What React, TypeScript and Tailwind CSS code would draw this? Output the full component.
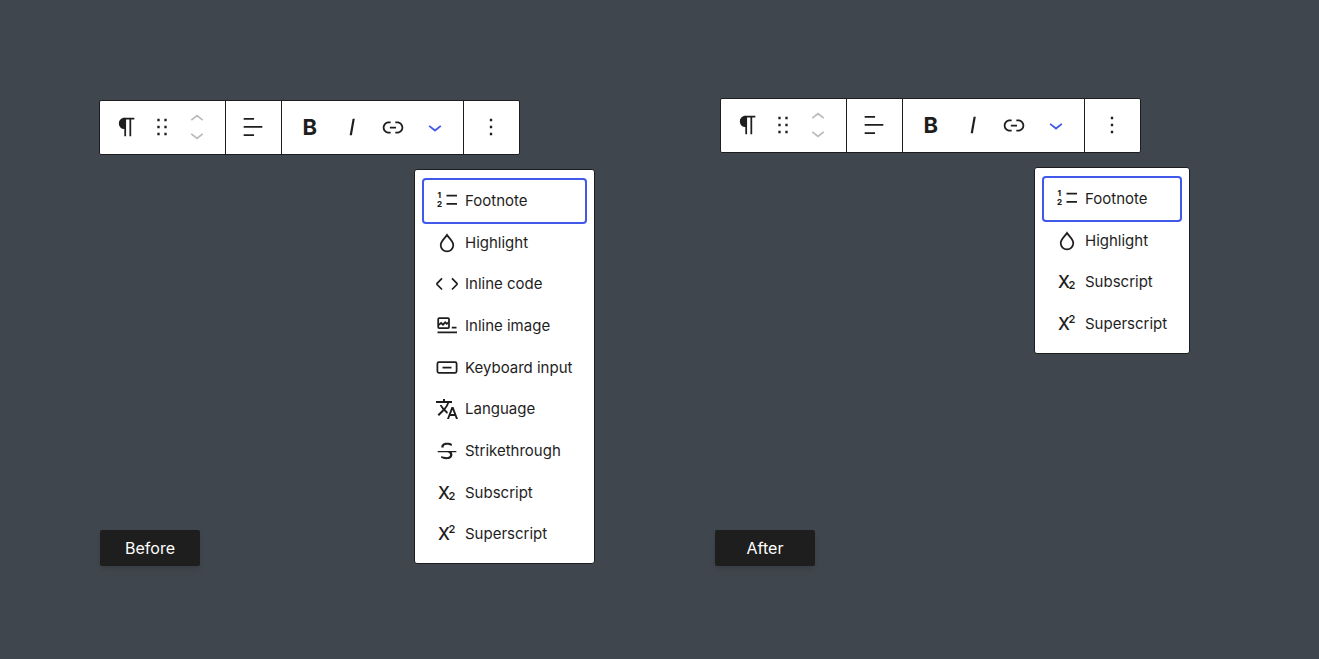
import type { ReactNode } from "react";
import clsx from "clsx";
import { MdTranslate } from "react-icons/md";

type IconProps = { children: ReactNode; size?: "default" | "mover" };

// 24 unit filled icon
const SolidIcon = ({ children, size = "default" }: IconProps) => (
  <svg
    viewBox={size === "mover" ? "0 5 24 14" : "0 0 24 24"}
    className={clsx("shrink-0", size === "mover" ? "h-4 w-7" : "size-7")}
    fill="currentColor"
    aria-hidden="true"
  >
    {children}
  </svg>
);

// 28 unit stroked icon, used in the dropdown
const MenuIcon = ({ children }: { children: ReactNode }) => (
  <svg
    viewBox="0 0 28 28"
    className="size-7 shrink-0"
    fill="none"
    stroke="currentColor"
    strokeWidth="1.75"
    aria-hidden="true"
  >
    {children}
  </svg>
);

const scriptIcon = (y: number) => (
  <MenuIcon>
    <g fill="currentColor" stroke="none">
      <text x="5" y="20" fontSize="17" className="font-medium">
        X
      </text>
      <text x="15.5" y={y} fontSize="11" className="font-semibold">
        2
      </text>
    </g>
  </MenuIcon>
);

const formats: Record<string, ReactNode> = {
  Footnote: (
    <MenuIcon>
      <path d="M13.5 8.6H24M13.5 16.8H24" />
      <g fill="currentColor" stroke="none" fontSize="8" className="font-extrabold">
        <text x="4.5" y="11">
          1
        </text>
        <text x="4" y="19.5">
          2
        </text>
      </g>
    </MenuIcon>
  ),
  Highlight: (
    <MenuIcon>
      <path d="M14 6C12.3 8.8 7.7 12.4 7.7 16.1a6.3 6.3 0 0 0 12.6 0C20.3 12.4 15.7 8.8 14 6Z" />
    </MenuIcon>
  ),
  "Inline code": (
    <MenuIcon>
      <path d="M9 8.3 4.1 13.3q-.5.6 0 1.2L9 19.5M19 8.3l4.9 5q.5.6 0 1.2l-4.9 5" />
    </MenuIcon>
  ),
  "Inline image": (
    <MenuIcon>
      <rect x="5.2" y="6.2" width="10.8" height="9.8" rx="1" />
      <path d="m5.5 13.2 2.6-2.2 1.9 1.7 2.2-2.4 1.6 1.6 2-1.7M18.8 15.5H23.5M4.5 20.3H24" />
    </MenuIcon>
  ),
  "Keyboard input": (
    <MenuIcon>
      <rect x="4.4" y="8.2" width="19.2" height="10.6" rx="1.5" />
      <path d="M9.5 13.6h9" />
    </MenuIcon>
  ),
  Language: <MdTranslate className="mx-0.5 size-6 shrink-0" aria-hidden="true" />,
  Strikethrough: (
    <SolidIcon>
      <path d="M9.1 9v-.5c0-.6.2-1.1.7-1.4.5-.3 1.2-.5 2-.5.7 0 1.4.1 2.1.3.7.2 1.4.5 2.1.9l.2-1.9c-.6-.3-1.2-.5-1.9-.7-.8-.1-1.6-.2-2.4-.2-1.5 0-2.7.3-3.6 1-.8.7-1.2 1.5-1.2 2.6V9h2zM20 12H4v1h8.3c.3.1.6.2.8.3.5.2.9.5 1.1.8.3.3.4.7.4 1.2 0 .7-.2 1.1-.8 1.5-.5.3-1.2.5-2.1.5-.8 0-1.6-.1-2.4-.3-.8-.2-1.5-.5-2.2-.8L7 18.1c.5.2 1.2.4 2 .6.8.2 1.6.3 2.4.3 1.7 0 3-.3 3.9-1 .9-.7 1.3-1.6 1.3-2.8 0-.9-.2-1.7-.7-2.2H20v-1z" />
    </SolidIcon>
  ),
  Subscript: scriptIcon(21),
  Superscript: scriptIcon(13),
};

const Group = ({ children }: { children: ReactNode }) => (
  <div className="flex border-r border-[#1e1e1e] pb-px last:border-r-0">{children}</div>
);

const Toolbar = () => (
  <div
    role="toolbar"
    aria-label="Block tools"
    className="flex h-[55px] w-[421px] rounded-[2px] border border-[#1e1e1e] bg-white text-[#1e1e1e]"
  >
    <Group>
      <div className="flex px-[7px]">
        <button className="flex w-10 items-center justify-center" aria-label="Paragraph">
          <SolidIcon>
            <path d="M18.3 4H9.9v-.1l-.9.2c-2.3.4-4 2.4-4 4.8s1.7 4.4 4 4.8l.7.1V20h1.5V5.5h2.9V20h1.5V5.5h2.7V4z" />
          </SolidIcon>
        </button>
        <button className="flex w-[29px] items-center justify-center" aria-label="Drag">
          <SolidIcon>
            <path d="M8 7h2V5H8v2zm0 6h2v-2H8v2zm0 6h2v-2H8v2zm6-14v2h2V5h-2zm0 8h2v-2h-2v2zm0 6h2v-2h-2v2z" />
          </SolidIcon>
        </button>
        <div className="flex w-[42px] flex-col items-center justify-center text-[#bbb]">
          <button aria-label="Move up">
            <SolidIcon size="mover">
              <path d="M6.5 12.4L12 8l5.5 4.4-.9 1.2L12 10l-4.5 3.6-1-1.2z" />
            </SolidIcon>
          </button>
          <button aria-label="Move down">
            <SolidIcon size="mover">
              <path d="M17.5 11.6L12 16l-5.5-4.4.9-1.2L12 14l4.5-3.6 1 1.2z" />
            </SolidIcon>
          </button>
        </div>
      </div>
    </Group>
    <Group>
      <button className="flex w-[55px] items-center justify-center pr-px" aria-label="Align">
        <SolidIcon>
          <path d="M4 19.8h8.9v-1.5H4v1.5zm8.9-15.6H4v1.5h8.9V4.2zm-8.9 7v1.5h16v-1.5H4z" />
        </SolidIcon>
      </button>
    </Group>
    <Group>
      <div className="flex w-[181px] px-[7px]">
        <button className="flex-1 text-[22px] font-bold" aria-label="Bold">
          B
        </button>
        <button className="flex flex-1 items-center justify-center" aria-label="Italic">
          <SolidIcon>
            <path d="M12.5 5L10 19h1.9l2.5-14z" />
          </SolidIcon>
        </button>
        <button className="flex flex-1 items-center justify-center" aria-label="Link">
          <SolidIcon>
            <path d="M15.6 7.2H14v1.5h1.6c2 0 3.7 1.7 3.7 3.7s-1.7 3.7-3.7 3.7H14v1.5h1.6c2.8 0 5.2-2.3 5.2-5.2 0-2.9-2.3-5.2-5.2-5.2zM4.7 12.4c0-2 1.7-3.7 3.7-3.7H10V7.2H8.4c-2.9 0-5.2 2.3-5.2 5.2 0 2.9 2.3 5.2 5.2 5.2H10v-1.5H8.4c-2 0-3.7-1.7-3.7-3.7zm4.6.9h5.3v-1.5H9.3v1.5z" />
          </SolidIcon>
        </button>
        <button
          className="flex flex-1 items-center justify-center text-[#4059e8]"
          aria-label="More formats"
          aria-expanded="true"
        >
          <SolidIcon>
            <path d="M17.5 11.6L12 16l-5.5-4.4.9-1.2L12 14l4.5-3.6 1 1.2z" />
          </SolidIcon>
        </button>
      </div>
    </Group>
    <Group>
      <button className="flex w-[55px] items-center justify-center pr-px" aria-label="Options">
        <SolidIcon>
          <path d="M13 19h-2v-2h2v2zm0-6h-2v-2h2v2zm0-6h-2V5h2v2z" />
        </SolidIcon>
      </button>
    </Group>
  </div>
);

type MenuProps = { items: string[]; className: string };

const FormatMenu = ({ items, className }: MenuProps) => (
  <div
    className={clsx(
      "absolute top-full mt-3.5 flex flex-col rounded-[3px] border border-[#1e1e1e] bg-white px-[9px] pt-2.5 pb-2 text-[#1e1e1e]",
      className
    )}
    role="menu"
  >
    {items.map((item, index) => (
      <button
        key={item}
        role="menuitem"
        className={clsx(
          "flex flex-1 items-center gap-1 rounded-[2px] pl-[9px] text-[15px] leading-5 whitespace-nowrap",
          index === 0 && "ring-2 ring-[#4059e8]"
        )}
      >
        {formats[item]}
        {item}
      </button>
    ))}
  </div>
);

const Label = ({ children }: { children: ReactNode }) => (
  <div className="flex h-9 w-[100px] items-center justify-center rounded-[2px] bg-[#1e1e1e] text-base text-white shadow-md">
    {children}
  </div>
);

const App = () => {
  return (
    <main className="flex min-h-screen items-start gap-[195px] bg-[#40464d] pt-[98px] pl-[99px] font-['Inter',sans-serif]">
      <section className="flex h-[468px] flex-col justify-between pt-0.5">
        <div className="relative">
          <Toolbar />
          <FormatMenu
            items={Object.keys(formats)}
            className="left-[315px] h-[395px] w-[181px]"
          />
        </div>
        <div className="pl-px">
          <Label>Before</Label>
        </div>
      </section>

      <section className="flex h-[468px] flex-col justify-between">
        <div className="relative ml-[5px]">
          <Toolbar />
          <FormatMenu
            items={["Footnote", "Highlight", "Subscript", "Superscript"]}
            className="left-[314px] h-[187px] w-[156px]"
          />
        </div>
        <Label>After</Label>
      </section>
    </main>
  );
};

export default App;
